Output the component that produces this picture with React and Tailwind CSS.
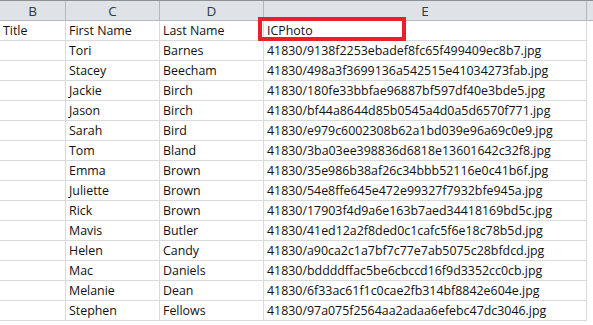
const rows = [
  ['Tori', 'Barnes', '41830/9138f2253ebadef8fc65f499409ec8b7.jpg'],
  ['Stacey', 'Beecham', '41830/498a3f3699136a542515e41034273fab.jpg'],
  ['Jackie', 'Birch', '41830/180fe33bbfae96887bf597df40e3bde5.jpg'],
  ['Jason', 'Birch', '41830/bf44a8644d85b0545a4d0a5d6570f771.jpg'],
  ['Sarah', 'Bird', '41830/e979c6002308b62a1bd039e96a69c0e9.jpg'],
  ['Tom', 'Bland', '41830/3ba03ee398836d6818e13601642c32f8.jpg'],
  ['Emma', 'Brown', '41830/35e986b38af26c34bbb52116e0c41b6f.jpg'],
  ['Juliette', 'Brown', '41830/54e8ffe645e472e99327f7932bfe945a.jpg'],
  ['Rick', 'Brown', '41830/17903f4d9a6e163b7aed34418169bd5c.jpg'],
  ['Mavis', 'Butler', '41830/41ed12a2f8ded0c1cafc5f6e18c78b5d.jpg'],
  ['Helen', 'Candy', '41830/a90ca2c1a7bf7c77e7ab5075c28bfdcd.jpg'],
  ['Mac', 'Daniels', '41830/bddddffac5be6cbccd16f9d3352cc0cb.jpg'],
  ['Melanie', 'Dean', '41830/6f33ac61f1c0cae2fb314bf8842e604e.jpg'],
  ['Stephen', 'Fellows', '41830/97a075f2564aa2adaa6efebc47dc3046.jpg'],
];

const cols = 'grid grid-cols-[66px_94px_104px_323px]';
const cell = 'h-[20px] border-r border-b border-[#d9dadb] flex items-center pl-[3px] pt-[1px] whitespace-nowrap overflow-visible';

export default function App() {
  return (
    <div className="w-[593px] h-[325px] bg-white overflow-hidden text-[12.4px] text-[#111]" style={{ fontFamily: '"Open Sans", "Liberation Sans", sans-serif' }}>
      {/* column letters */}
      <div className={`${cols} h-[21px] bg-[#dfe2e6] border-t border-b border-[#8e9196] border-b-[#b5b8bc] text-[#2d3b48] text-[13.5px]`}>
        {['B', 'C', 'D', 'E'].map((c) => (
          <div key={c} className="border-r border-[#b5b8bc] flex items-center justify-center">
            {c}
          </div>
        ))}
      </div>

      {/* field names */}
      <div className={cols}>
        <div className={cell}>Title</div>
        <div className={cell}>First Name</div>
        <div className={cell}>Last Name</div>
        <div className={`${cell} relative`}>
          ICPhoto
          <div className="absolute left-[-6px] top-[-4px] w-[148px] h-[24px] border-[4px] border-[#e8202a]" />
        </div>
      </div>

      {rows.map(([first, last, photo]) => (
        <div key={photo} className={cols}>
          <div className={cell}></div>
          <div className={cell}>{first}</div>
          <div className={cell}>{last}</div>
          <div className={cell}>{photo}</div>
        </div>
      ))}
    </div>
  );
}
